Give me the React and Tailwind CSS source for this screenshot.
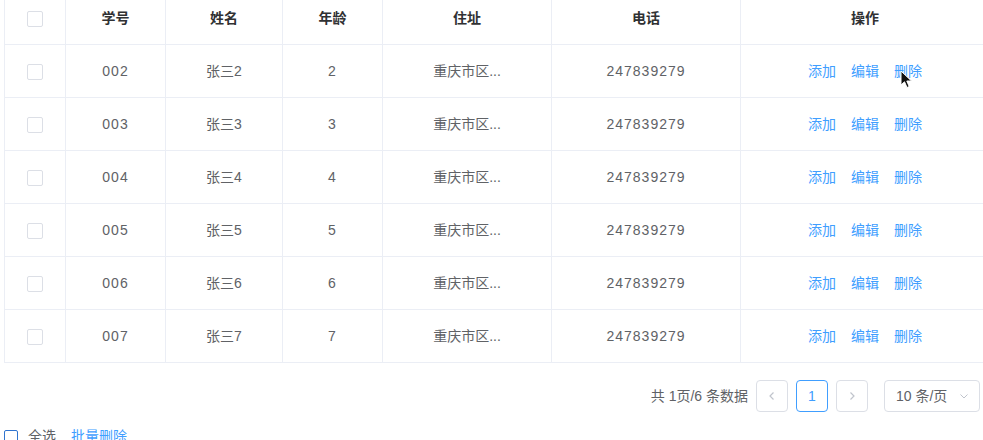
import React from "react";

const cols = [
  { key: "cb", w: "w-[61px]" },
  { key: "id", w: "w-[100px]", title: "学号" },
  { key: "name", w: "w-[117px]", title: "姓名" },
  { key: "age", w: "w-[100px]", title: "年龄" },
  { key: "addr", w: "w-[169px]", title: "住址" },
  { key: "tel", w: "w-[189px]", title: "电话" },
  { key: "op", w: "w-[248px]", title: "操作" },
];

const rows = [2, 3, 4, 5, 6, 7].map((n) => ({
  id: "00" + n,
  name: "张三" + n,
  age: String(n),
  addr: "重庆市区...",
  tel: "247839279",
}));

function Checkbox() {
  return <span className="block w-4 h-4 bg-white border border-[#dcdfe6] rounded-[2px]" />;
}

function Cell({ w, children, last, extra = "" }) {
  return (
    <div className={`${w} shrink-0 h-full flex items-center justify-center ${extra} ${last ? "" : "border-r border-[#ebeef5]"}`}>
      {children}
    </div>
  );
}

export default function App() {
  return (
    <div
      className="relative w-[983px] h-[440px] overflow-hidden bg-white text-[14px]"
      style={{ fontFamily: '"Liberation Sans", "Noto Sans CJK SC", sans-serif' }}
    >
      <div className="ml-[4px] w-[985px] border-l border-[#ebeef5]">
        <div className="flex h-[45px] border-b border-[#ebeef5] font-bold text-[#303133]">
          {cols.map((c, i) => (
            <Cell key={c.key} w={c.w} last={i === cols.length - 1} extra="pb-[7px]">
              {c.key === "cb" ? <Checkbox /> : c.title}
            </Cell>
          ))}
        </div>
        {rows.map((r) => (
          <div key={r.id} className="flex h-[53px] border-b border-[#ebeef5] text-[#606266]">
            <Cell w="w-[61px]" extra="pt-[1px]"><Checkbox /></Cell>
            <Cell w="w-[100px]" extra="pt-[1px]"><span className="tracking-[1px]">{r.id}</span></Cell>
            <Cell w="w-[117px]" extra="pt-[1px]">{r.name}</Cell>
            <Cell w="w-[100px]" extra="pt-[1px]"><span className="tracking-[1px]">{r.age}</span></Cell>
            <Cell w="w-[169px]" extra="pt-[1px]">{r.addr}</Cell>
            <Cell w="w-[189px]" extra="pt-[1px]"><span className="tracking-[1px]">{r.tel}</span></Cell>
            <Cell w="w-[248px]" last extra="pt-[1px]">
              <div className="flex gap-[15px] text-[#409eff]">
                <span>添加</span>
                <span>编辑</span>
                <span>删除</span>
              </div>
            </Cell>
          </div>
        ))}
      </div>

      <div className="mt-[17px] flex justify-end items-center pr-[3px] text-[#606266]">
        <span className="mr-[8px]">共 1页/6 条数据</span>
        <button className="w-[32px] h-[32px] border border-[#dcdfe6] rounded-[4px] flex items-center justify-center text-[#c0c4cc]">
          <svg width="10" height="10" viewBox="0 0 10 10" fill="none" stroke="currentColor" strokeWidth="1.2">
            <path d="M6.5 1.5 L3 5 L6.5 8.5" />
          </svg>
        </button>
        <button className="ml-[8px] w-[32px] h-[32px] border border-[#409eff] rounded-[4px] flex items-center justify-center text-[#409eff]">
          1
        </button>
        <button className="ml-[8px] w-[32px] h-[32px] border border-[#dcdfe6] rounded-[4px] flex items-center justify-center text-[#c0c4cc]">
          <svg width="10" height="10" viewBox="0 0 10 10" fill="none" stroke="currentColor" strokeWidth="1.2">
            <path d="M3.5 1.5 L7 5 L3.5 8.5" />
          </svg>
        </button>
        <div className="ml-[16px] w-[96px] h-[32px] border border-[#dcdfe6] rounded-[4px] flex items-center justify-between pl-[11px] pr-[10px] text-[#606266]">
          <span>10 条/页</span>
          <svg width="10" height="10" viewBox="0 0 10 10" fill="none" stroke="#c0c4cc" strokeWidth="1">
            <path d="M1.5 3.5 L5 7 L8.5 3.5" />
          </svg>
        </div>
      </div>

      <div className="mt-[14px] ml-[4px] flex items-center text-[14px]">
        <span className="block w-[14px] h-[14px] border border-[#2f74cf] rounded-[2px] bg-white" />
        <span className="ml-[10px] text-[#606266]">全选</span>
        <span className="ml-[15px] text-[#409eff]">批量删除</span>
      </div>

      <svg className="absolute left-[900px] top-[70px]" width="13" height="20" viewBox="0 0 13 20">
        <path d="M1 1 L1 15 L4.5 11.8 L7 17.5 L9.2 16.5 L6.8 11 L11.5 11 Z" fill="#111" stroke="#fff" strokeWidth="1" />
      </svg>
    </div>
  );
}
